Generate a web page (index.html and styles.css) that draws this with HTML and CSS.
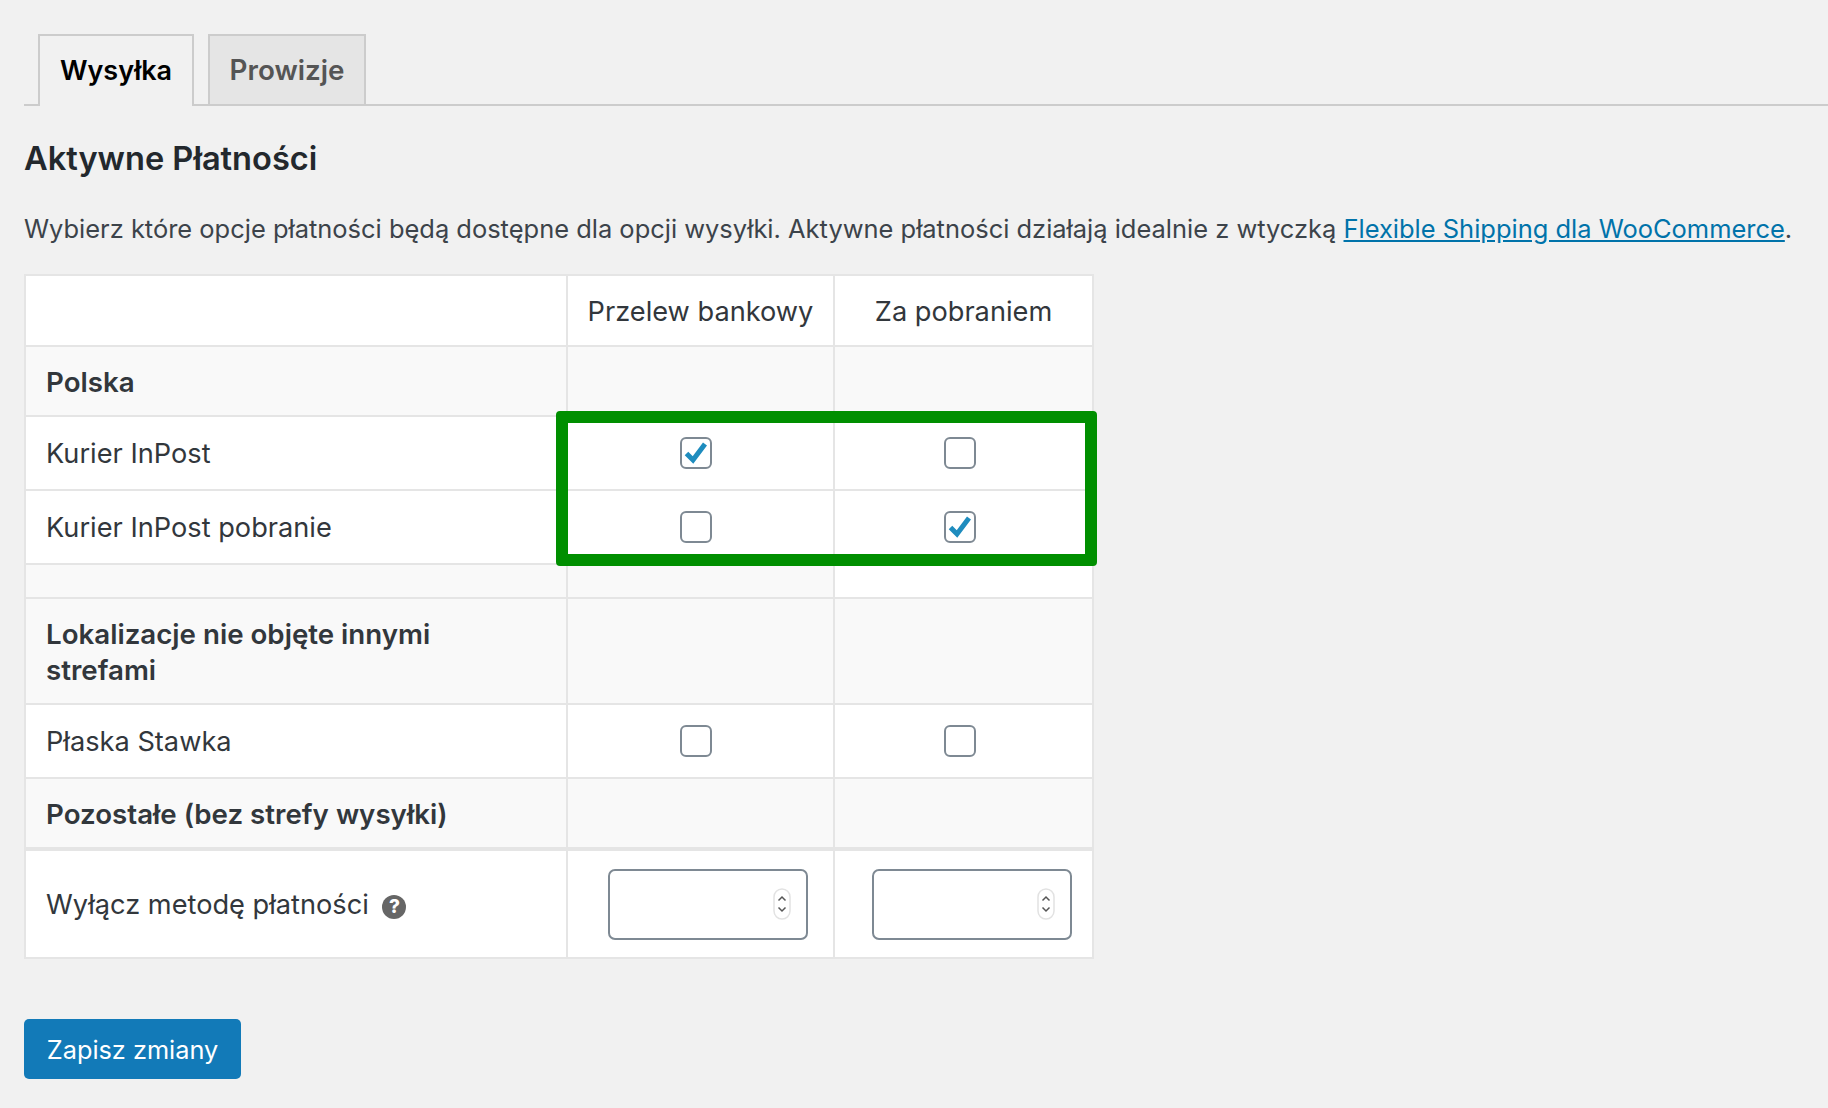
FILE: index.html
```html
<!DOCTYPE html>
<html lang="pl">
<head>
<meta charset="utf-8">
<title>Aktywne Płatności</title>
<link rel="stylesheet" href="styles.css">
</head>
<body>
<main class="page">
  <nav class="tabs">
    <a class="tab tab-active">Wysyłka</a>
    <a class="tab">Prowizje</a>
  </nav>
  <h2 class="title">Aktywne Płatności</h2>
  <p class="intro">Wybierz które opcje płatności będą dostępne dla opcji wysyłki. Aktywne płatności działają idealnie z wtyczką <a class="link">Flexible Shipping dla WooCommerce</a>.</p>
  <div class="table-wrap">
    <table class="grid">
      <colgroup><col class="c1"><col class="c2"><col class="c3"></colgroup>
      <tr class="r-head"><td></td><td class="center">Przelew bankowy</td><td class="center">Za pobraniem</td></tr>
      <tr class="r-zone shade"><th>Polska</th><td></td><td></td></tr>
      <tr class="r-row"><td>Kurier InPost</td>
        <td class="center"><span class="cb"><svg viewBox="0 0 28 28" class="tick"><path d="M4.500 14.500l6.500 6.500L23 5"/></svg></span></td>
        <td class="center"><span class="cb cb-b"></span></td></tr>
      <tr class="r-row"><td>Kurier InPost pobranie</td>
        <td class="center"><span class="cb"></span></td>
        <td class="center"><span class="cb cb-b"><svg viewBox="0 0 28 28" class="tick"><path d="M4.500 14.500l6.500 6.500L23 5"/></svg></span></td></tr>
      <tr class="r-gap"><td class="tint"></td><td class="tint"></td><td></td></tr>
      <tr class="r-zone2 shade"><th>Lokalizacje nie objęte innymi strefami</th><td></td><td></td></tr>
      <tr class="r-row"><td>Płaska Stawka</td>
        <td class="center"><span class="cb"></span></td>
        <td class="center"><span class="cb cb-b"></span></td></tr>
      <tr class="r-zone shade r-last"><th>Pozostałe (bez strefy wysyłki)</th><td></td><td></td></tr>
      <tr class="r-foot"><td>Wyłącz metodę płatności <span class="help">?</span></td>
        <td class="field-cell"><div class="num"><svg class="spin" viewBox="0 0 18 32"><rect x="1" y="1" width="16" height="30" rx="8"/><path d="M5.500 12.500L9 9l3.500 3.500M5.500 19.500L9 23l3.500-3.500"/></svg></div></td>
        <td class="field-cell field-cell-b"><div class="num"><svg class="spin" viewBox="0 0 18 32"><rect x="1" y="1" width="16" height="30" rx="8"/><path d="M5.500 12.500L9 9l3.500 3.500M5.500 19.500L9 23l3.500-3.500"/></svg></div></td></tr>
    </table>
    <div class="highlight"></div>
  </div>
  <button class="save">Zapisz zmiany</button>
</main>
</body>
</html>
```
FILE: styles.css
```css
* { box-sizing: border-box; }
html, body { margin: 0; background: #f1f1f1; }
body { font-family: Inter, "Noto Sans", sans-serif; color: #32373c; font-size: 24px; height: 1108px; overflow: hidden; }
.page { padding: 34px 0 0 24px; }
.tabs { display: flex; gap: 14px; padding-left: 14px; border-bottom: 2px solid #ccc; height: 72px; }
.tab { display: flex; align-items: center; justify-content: center; width: 156px; height: 72px; padding-bottom: 2px; background: #e5e5e5; border: 2px solid #ccc; border-bottom: 0; font-size: 27px; font-weight: 600; color: #555; }
.tab-active { background: #f1f1f1; color: #000; margin-bottom: -2px; position: relative; }
.tab + .tab { width: 158px; height: 70px; padding-bottom: 0; font-size: 27.800px; }
.title { margin: 32px 0 0; font-size: 32.600px; line-height: 40px; font-weight: 600; color: #23282d; }
.intro { margin: 33px 0 0; font-size: 25.460px; line-height: 36px; color: #3c434a; white-space: nowrap; }
.link { color: #0073aa; text-decoration: underline; }
.table-wrap { position: relative; width: 1070px; margin-top: 27px; }
.grid { width: 1068px; border-collapse: collapse; table-layout: fixed; background: #fff; border: 2px solid #e5e5e5; }
.c1 { width: 542px; }
.c2 { width: 267px; }
.c3 { width: 259px; }
.grid th, .grid td { border: 2px solid #e5e5e5; padding: 2px 20px 0; font-size: 27.200px; font-weight: 400; text-align: left; line-height: 36px; color: #32373c; }
.grid th { font-size: 27.700px; font-weight: 600; }
.grid td.center { text-align: center; padding: 0; }
.r-head td.center { padding-top: 2px; }
.shade th, .shade td, .tint { background: #f9f9f9; }
.r-head { height: 71px; }
.r-zone { height: 70px; }
.r-row { height: 74px; }
.r-gap { height: 34px; }
.r-zone2 { height: 106px; }
.r-last { height: 71px; }
.r-foot { height: 109px; }
.r-last th, .r-last td { border-bottom-width: 4px; }
.r-zone2 th { padding-right: 60px; }
.cb { display: inline-flex; align-items: center; justify-content: center; width: 32px; height: 32px; margin: 0 10px 3px 0; vertical-align: middle; background: #fff; border: 2px solid #7e8993; border-radius: 6px; }
.cb-b { margin-right: 8px; }
.tick { width: 28px; height: 28px; }
.tick path { fill: none; stroke: #1e8cbe; stroke-width: 5; }
.help { display: inline-flex; align-items: center; justify-content: center; width: 24px; height: 24px; margin-left: 6px; border-radius: 50%; background: #666; color: #fff; font-size: 19px; font-weight: 800; line-height: 24px; vertical-align: 1px; }
.grid td.field-cell { padding: 0 27px 0 40px; }
.grid td.field-cell-b { padding: 0 22px 0 37px; }
.num { display: flex; align-items: center; justify-content: flex-end; width: 200px; height: 71px; padding-right: 15px; background: #fff; border: 2px solid #7e8993; border-radius: 7px; }
.spin { width: 18px; height: 32px; }
.spin rect { fill: #fff; stroke: #e2e2e2; stroke-width: 1.500; }
.spin path { fill: none; stroke: #555; stroke-width: 1.500; }
.highlight { position: absolute; left: 532px; top: 137px; width: 541px; height: 155px; border: 12px solid #008f00; border-radius: 4px; pointer-events: none; }
.save { display: block; margin-top: 60px; width: 217px; height: 60px; padding: 0; background: #127ab8; color: #fff; border: 0; border-radius: 5px; font-family: inherit; font-size: 25.300px; }
```
